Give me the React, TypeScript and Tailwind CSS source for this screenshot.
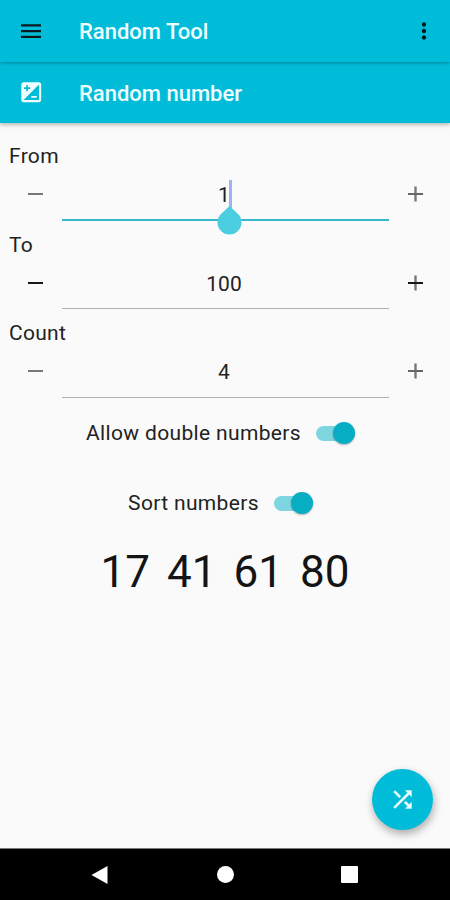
import React from 'react'
import { MdIso, MdMoreVert } from 'react-icons/md'

interface NumberFieldProps {
  label: string
  value: string
  active?: boolean
  strongMinus?: boolean
  strongPlus?: boolean
}

function MenuIcon() {
  return (
    <svg className="h-[14px] w-5" viewBox="0 0 20 14" stroke="#06191c" strokeWidth="2.2">
      <path d="M0 1.400h20M0 7.200h20M0 12.900h20" />
    </svg>
  )
}

function ShuffleIcon() {
  return (
    <svg
      className="size-[27px]"
      viewBox="0 0 24 24"
      fill="currentColor"
      stroke="currentColor"
      strokeWidth="0.3"
    >
      <path d="M10.59 9.17L5.41 4 4 5.410l5.170 5.170 1.420-1.410zM14.500 4l2.040 2.040L4 18.590 5.410 20 17.960 7.460 20 9.500V4h-5.500zm.33 9.410l-1.410 1.410 3.130 3.130L14.500 20H20v-5.500l-2.040 2.040-3.130-3.130z" />
    </svg>
  )
}

function NumberField({ label, value, active, strongMinus, strongPlus }: NumberFieldProps) {
  return (
    <div className="h-[88.5px]">
      <label className="block h-8 pl-[9px] text-[21px] leading-8 tracking-[0.3px]">{label}</label>
      <div className={`flex ${active ? 'h-[49px]' : 'h-[48.5px]'}`}>
        <button aria-label={`Decrease ${label}`} className="flex w-[62px] justify-center pl-[9px]">
          <span className={`mt-[21px] h-[2px] w-[15px] ${strongMinus ? 'bg-[#181818]' : 'bg-[#777]'}`} />
        </button>
        <div
          className={`relative flex w-[327px] justify-center ${
            active ? 'border-b-2 border-[#37b9cb]' : 'border-b border-[#b0b0b0]'
          }`}
        >
          <span className="h-[44px] pr-[3px] text-[21px] leading-[46px]">{value}</span>
          {active && (
            <>
              <span className="absolute top-[8px] left-[167px] h-[28px] w-[3px] bg-[#9fb0f4]" />
              <svg className="absolute top-[33px] left-[155px] h-[30px] w-[25px]" viewBox="0 0 25 30">
                <path d="M12.5 1 L21 9 A12 12 0 1 1 4 9 Z" fill="#4bcee0" />
              </svg>
            </>
          )}
        </div>
        <button aria-label={`Increase ${label}`} className="flex flex-1 justify-center pr-[8px]">
          <svg className="mt-[14px] h-4 w-4" viewBox="0 0 16 16">
            <path d="M7.5 0.5v15" stroke="#777" strokeWidth="2.4" />
            <path d="M0 8h15" stroke={strongPlus ? '#181818' : '#666'} strokeWidth="2" />
          </svg>
        </button>
      </div>
    </div>
  )
}

function ToggleRow({ label }: { label: string }) {
  return (
    <div className="flex h-[70px] items-center justify-center pr-[9px]">
      <span className="pt-px text-[21px] tracking-[0.35px]">{label}</span>
      <span className="ml-[15px] flex h-[15px] w-[39px] items-center justify-end rounded-full bg-[#7dd5e0]">
        <span className="size-[22px] shrink-0 rounded-full bg-[#07aec3] shadow-[0_1px_2px_rgba(0,0,0,0.3)]" />
      </span>
    </div>
  )
}

const NUMBERS = [17, 41, 61, 80]

export default function App() {
  return (
    <div className="flex h-[900px] w-[450px] flex-col overflow-hidden bg-[#fafafa] font-[Roboto,sans-serif] text-[#222]">
      <header className="relative z-10 flex h-[62px] items-center bg-[#00bcd8] pl-[21px] shadow-[0_1px_3px_rgba(0,0,0,0.3)]">
        <MenuIcon />
        <h1 className="ml-[38px] flex-1 pt-px text-[22px] font-medium text-[#effdff]">Random Tool</h1>
        <MdMoreVert className="mr-[13px] size-[26px] text-[#06191c]" />
      </header>
      <div className="flex h-[61px] items-center bg-[#00bcd8] pl-[18px] text-[#effdff] shadow-[0_2px_4px_rgba(0,0,0,0.25)]">
        <MdIso className="size-[26.5px]" />
        <h2 className="ml-[34.5px] pt-px text-[22px] font-medium">Random number</h2>
      </div>

      <main className="flex flex-1 flex-col pt-[17px]">
        <NumberField label="From" value="1" active />
        <NumberField label="To" value="100" strongMinus strongPlus />
        <NumberField label="Count" value="4" />
        <div className="-mt-[7.5px]">
          <ToggleRow label="Allow double numbers" />
          <ToggleRow label="Sort numbers" />
        </div>
        <div className="flex h-[68px] items-center justify-center gap-[17px] text-[44px] leading-none text-[#141414]">
          {NUMBERS.map((n) => (
            <span key={n}>{n}</span>
          ))}
        </div>
        <button
          aria-label="Shuffle"
          className="mt-auto mr-[17px] mb-[18px] flex size-[61px] items-center justify-center self-end rounded-full bg-[#00bcd8] text-[#effdff] shadow-[1px_4px_8px_rgba(0,0,0,0.32)]"
        >
          <ShuffleIcon />
        </button>
      </main>

      <nav className="flex h-[52px] items-center border-t border-[#777] bg-black pl-[91px]">
        <svg className="h-[18px] w-[17px]" viewBox="0 0 17 18">
          <path d="M0.5 9 L16.5 0 V18 Z" fill="#fff" />
        </svg>
        <span className="ml-[109px] size-[17px] rounded-full bg-white" />
        <span className="ml-[107px] size-[17px] rounded-[1px] bg-white" />
      </nav>
    </div>
  )
}
